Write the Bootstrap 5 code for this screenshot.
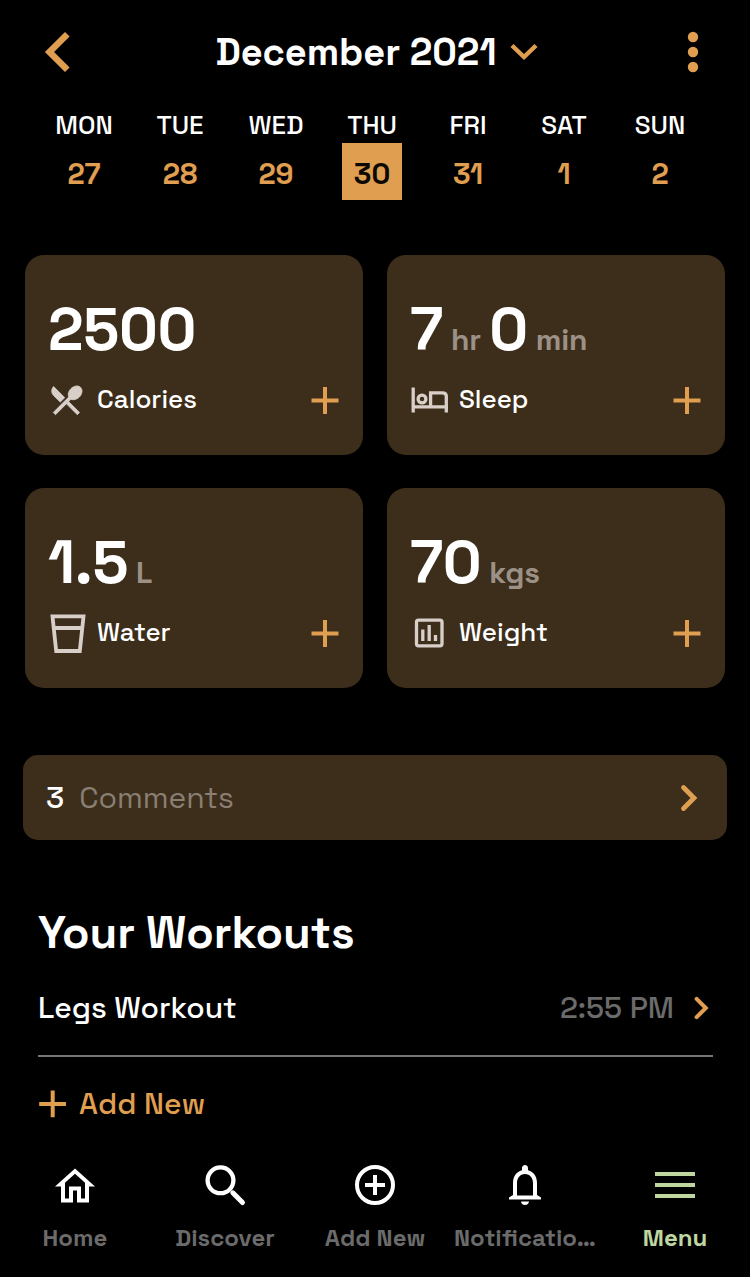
<!DOCTYPE html>
<html lang="en">
<head>
<meta charset="utf-8">
<meta name="viewport" content="width=device-width, initial-scale=1">
<title>Fitness Diary</title>
<link href="https://cdn.jsdelivr.net/npm/bootstrap@5.3.0/dist/css/bootstrap.min.css" rel="stylesheet">
<style>
  :root { --amber: #e09e50; --panel: #3d2e1c; --soft: #9c9186; --dim: #6b6b6b; --lime: #bfd6a0; }
  body { background: #000; color: #fff; font-family: "Space Grotesk", Inter, "Liberation Sans", sans-serif; line-height: 1; overflow: hidden; }
  svg { display: block; flex: none; }
  .screen { width: 750px; height: 1277px; }
  .amber { color: var(--amber); }
  .topbar { height: 103px; padding: 0 51px 0 44px; }
  .month { font-size: 38px; font-weight: 700; gap: 13px; padding-right: 6px; letter-spacing: -.05px; }
  .week { padding: 0 42px 0 36px; }
  .dayname { height: 40px; line-height: 40px; padding-top: 2px; font-size: 26px; font-weight: 500; }
  .daynum { width: 60px; height: 57px; line-height: 61px; font-size: 29px; font-weight: 600; color: var(--amber); }
  .daynum.today { background: var(--amber); color: #0c0904; }
  .stats { display: grid; grid-template-columns: 338px 338px; gap: 33px 24px; padding: 55px 25px 0; }
  .stat { height: 200px; border-radius: 19px; background: var(--panel); padding: 45px 24px 0; }
  .figure-row { height: 60px; line-height: 60px; white-space: nowrap; }
  .amount { font-size: 60px; font-weight: 700; margin-left: -1px; letter-spacing: -.3px; }
  .unit { font-size: 30px; font-weight: 600; color: var(--soft); letter-spacing: -.1px; }
  .stat-foot { height: 60px; margin-top: 10px; font-size: 26px; font-weight: 500; }
  .stat-foot span { padding-bottom: 2px; }
  .stat-icon { width: 48px; color: #d8d0c8; }
  .comments { margin: 67px 23px 0; height: 85px; border-radius: 15px; background: var(--panel); padding: 0 29px 0 23px; font-size: 30px; }
  .comments-word { color: #8a7f73; margin-left: 15px; }
  .workouts { padding: 65px 37px 0 38px; }
  .workouts h2 { font-size: 45px; font-weight: 700; line-height: 56px; height: 54px; margin: 0; letter-spacing: -.05px; }
  .workout { height: 98px; padding-top: 2px; border-bottom: 2px solid #757575; font-size: 30px; font-weight: 500; }
  .workout-time { color: var(--dim); margin-right: 15px; }
  .addnew { height: 94px; gap: 13px; font-size: 30px; font-weight: 500; }
  .tabs { height: 124px; font-size: 24px; font-weight: 600; color: var(--dim); }
  .tab-cell { width: 150px; padding-top: 8px; }
  .tab-cell svg { color: #fff; }
  .tab-label { height: 26px; line-height: 26px; margin-top: 16px; }
  .tab-cell.current, .tab-cell.current svg { color: var(--lime); }
</style>
</head>
<body>
<svg width="0" height="0" class="position-absolute">
  <symbol id="plus" viewBox="0 0 28 28"><path d="M14 1v27M.5 14.500h27" stroke="currentColor" stroke-width="4"/></symbol>
</svg>
<main class="screen d-flex flex-column">
  <header class="topbar d-flex align-items-center justify-content-between">
    <svg width="28" height="42" viewBox="0 0 28 42"><path d="M23.3 3.3 5.5 21l17.8 17.7" fill="none" stroke="#e09e50" stroke-width="6.5"/></svg>
    <div class="month d-flex align-items-center"><span>December 2021</span>
      <svg width="28" height="18" viewBox="0 0 28 18"><path d="M2 2.5 14 14 26 2.5" fill="none" stroke="#e09e50" stroke-width="4.5"/></svg>
    </div>
    <svg width="12" height="42" viewBox="0 0 12 42" fill="#e09e50"><circle cx="6" cy="6" r="5.2"/><circle cx="6" cy="21" r="5.2"/><circle cx="6" cy="36" r="5.2"/></svg>
  </header>

  <section class="week d-flex text-center">
    <div class="flex-fill w-100 d-flex flex-column align-items-center"><div class="dayname">MON</div><div class="daynum">27</div></div>
    <div class="flex-fill w-100 d-flex flex-column align-items-center"><div class="dayname">TUE</div><div class="daynum">28</div></div>
    <div class="flex-fill w-100 d-flex flex-column align-items-center"><div class="dayname">WED</div><div class="daynum">29</div></div>
    <div class="flex-fill w-100 d-flex flex-column align-items-center"><div class="dayname">THU</div><div class="daynum today">30</div></div>
    <div class="flex-fill w-100 d-flex flex-column align-items-center"><div class="dayname">FRI</div><div class="daynum">31</div></div>
    <div class="flex-fill w-100 d-flex flex-column align-items-center"><div class="dayname">SAT</div><div class="daynum">1</div></div>
    <div class="flex-fill w-100 d-flex flex-column align-items-center"><div class="dayname">SUN</div><div class="daynum">2</div></div>
  </section>

  <section class="stats">
    <article class="stat">
      <div class="figure-row d-flex align-items-baseline"><span class="amount">2500</span></div>
      <div class="stat-foot d-flex align-items-center">
        <div class="stat-icon"><svg width="38" height="38" viewBox="1 0 24 24" fill="currentColor"><path d="M8.1 13.34l2.83-2.83L3.91 3.5c-1.56 1.56-1.56 4.09 0 5.66l4.19 4.18zm6.78-1.81c1.53.71 3.68.21 5.27-1.38 1.91-1.91 2.28-4.65.81-6.12-1.46-1.46-4.2-1.1-6.12.81-1.59 1.59-2.09 3.74-1.38 5.27L3.7 19.87l1.41 1.41L12 14.41l6.88 6.88 1.41-1.41L13.41 13l1.47-1.47z" stroke="currentColor" stroke-width=".5" stroke-linejoin="round"/></svg></div>
        <span>Calories</span><svg class="amber ms-auto" width="28" height="28"><use href="#plus"/></svg>
      </div>
    </article>
    <article class="stat">
      <div class="figure-row d-flex align-items-baseline"><span class="amount">7</span><span class="unit ms-2">hr</span><span class="amount ms-2">0</span><span class="unit ms-2">min</span></div>
      <div class="stat-foot d-flex align-items-center">
        <div class="stat-icon"><svg width="38" height="26" viewBox="0 0 38 26" fill="none" stroke="currentColor" stroke-width="3.3"><path d="M2.2 .5v25M2 19.8h35M35.3 25.500V9q0-3.200-4-3.200H19.600v14"/><circle cx="11" cy="12" r="3.900"/></svg></div>
        <span>Sleep</span><svg class="amber ms-auto" width="28" height="28"><use href="#plus"/></svg>
      </div>
    </article>
    <article class="stat">
      <div class="figure-row d-flex align-items-baseline"><span class="amount">1.5</span><span class="unit ms-2">L</span></div>
      <div class="stat-foot d-flex align-items-center">
        <div class="stat-icon"><svg width="38" height="40" viewBox="0 0 38 40" fill="none" stroke="currentColor" stroke-width="3.8"><path d="M3.500 3.400h31L30.800 38H7.200zM4.500 15h29"/></svg></div>
        <span>Water</span><svg class="amber ms-auto" width="28" height="28"><use href="#plus"/></svg>
      </div>
    </article>
    <article class="stat">
      <div class="figure-row d-flex align-items-baseline"><span class="amount">70</span><span class="unit ms-2">kgs</span></div>
      <div class="stat-foot d-flex align-items-center">
        <div class="stat-icon"><svg width="36" height="30" viewBox="0 0 36 30" fill="none" stroke="currentColor" stroke-width="3.3"><rect x="5.500" y="2.200" width="25.500" height="25.600" rx="2"/><path d="M11.800 11.500V23M18.200 7v16M24.500 17v6"/></svg></div>
        <span>Weight</span><svg class="amber ms-auto" width="28" height="28"><use href="#plus"/></svg>
      </div>
    </article>
  </section>

  <section class="comments d-flex align-items-center">
    <span class="fw-medium">3</span><span class="comments-word">Comments</span>
    <svg class="ms-auto" width="18" height="28" viewBox="0 0 18 28"><path d="M3.500 3.500 14 14 3.500 24.500" fill="none" stroke="#e09e50" stroke-width="4.800" stroke-linecap="round"/></svg>
  </section>

  <section class="workouts">
    <h2>Your Workouts</h2>
    <div class="workout d-flex align-items-center">
      <span>Legs Workout</span><span class="workout-time ms-auto">2:55 PM</span>
      <svg width="24" height="24" viewBox="0 0 24 24"><path d="M7.600 2.800 16.800 12 7.600 21.200" fill="none" stroke="#e09e50" stroke-width="4" stroke-linecap="round"/></svg>
    </div>
    <div class="addnew amber d-flex align-items-center"><svg width="28" height="28" viewBox="-.7 .5 28 28"><use href="#plus" width="28" height="28"/></svg><span>Add New</span></div>
  </section>

  <nav class="tabs d-flex mt-auto">
    <div class="tab-cell d-flex flex-column align-items-center">
      <svg width="48" height="48" viewBox="0 -.7 24 24" fill="currentColor"><path d="M12 5.690l5 4.500V18h-2v-6H9v6H7v-7.810l5-4.500M12 3L2 12h3v8h6v-6h2v6h6v-8h3L12 3z"/></svg>
      <div class="tab-label">Home</div></div>
    <div class="tab-cell d-flex flex-column align-items-center">
      <svg width="48" height="48" viewBox="0 0 48 48" fill="none" stroke="currentColor"><circle cx="19.500" cy="19.300" r="12.900" stroke-width="4.300"/><path d="m31.800 31.800 9.700 9.700" stroke-width="5" stroke-linecap="round"/></svg>
      <div class="tab-label">Discover</div></div>
    <div class="tab-cell d-flex flex-column align-items-center">
      <svg width="48" height="48" viewBox="0 0 48 48" fill="none" stroke="currentColor" stroke-width="4"><circle cx="24" cy="24" r="18"/><path d="M24 14v20M14 24h20"/></svg>
      <div class="tab-label">Add New</div></div>
    <div class="tab-cell d-flex flex-column align-items-center">
      <svg width="48" height="48" viewBox="0 0 24 24" fill="currentColor"><path d="M12 22c1.100 0 2-.900 2-1.800h-4c0 .900.900 1.800 2 1.800zm6-5v-6c0-3.070-1.630-5.640-4.500-6.320V3.500c0-.830-.670-1.500-1.500-1.500s-1.500.670-1.500 1.500v1.180C7.640 5.360 6 7.920 6 11v6l-2 1.300v1h16v-1L18 17zm-2 .300H8V11c0-2.480 1.510-4.500 4-4.500s4 2.020 4 4.500v6.300z"/></svg>
      <div class="tab-label">Notificatio…</div></div>
    <div class="tab-cell current d-flex flex-column align-items-center">
      <svg width="48" height="48" viewBox="0 0 48 48" stroke="currentColor" stroke-width="4"><path d="M4 13h40M4 24h40M4 35h40"/></svg>
      <div class="tab-label">Menu</div></div>
  </nav>
</main>
<script src="https://cdn.jsdelivr.net/npm/bootstrap@5.3.0/dist/js/bootstrap.bundle.min.js"></script>
</body>
</html>
